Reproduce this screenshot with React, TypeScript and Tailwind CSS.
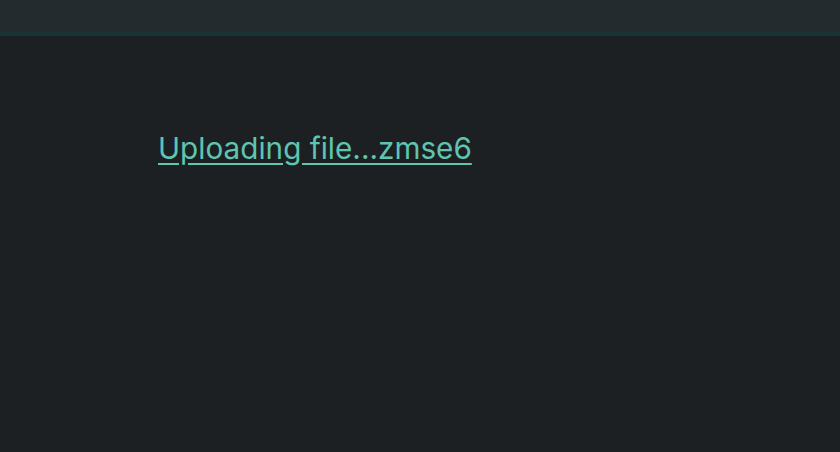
export default function App() {
  return (
    <div className="w-[840px] h-[452px] bg-[#1c2023] flex flex-col" style={{ fontFamily: "Inter, sans-serif" }}>
      <div className="h-[32px] bg-[#232b2f] border-b-4 border-[#193434] box-content" />
      <div className="pl-[158px] pt-[93px]">
        <a href="#" className="text-[29.7px] leading-[38px] text-[#5fc4b0] underline underline-offset-[4px]">
          Uploading file...zmse6
        </a>
      </div>
    </div>
  );
}
